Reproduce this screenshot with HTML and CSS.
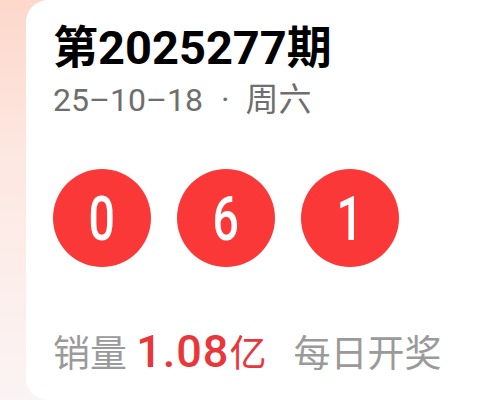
FILE: index.html
```html
<html>
	<head>
		<meta charset="utf-8">
		<title>Draw</title>
		<link rel="stylesheet" href="styles.css">
	</head>
	<body>
		<div class="page">
			<div class="side-strip"></div>
			<div class="draw-card">
				<div class="issue-title">第<span class="num">2025277</span>期</div>
				<div class="issue-date"><span class="num">25–10–18</span><span class="dot">·</span>周六</div>
				<div class="ball-row">
					<div class="ball"><span class="ball-num">0</span></div>
					<div class="ball"><span class="ball-num">6</span></div>
					<div class="ball"><span class="ball-num">1</span></div>
				</div>
				<div class="sales-line">
					<span class="sales-label">销量</span>
					<span class="sales-value"><span class="num">1.08</span>亿</span>
					<span class="sales-note">每日开奖</span>
				</div>
			</div>
		</div>
	</body>
</html>
```

FILE: styles.css
```css
body {
	margin: 0;
	background-color: #ffffff;
	font-family: Roboto, "Noto Sans CJK SC", sans-serif;
}

.page {
	display: flex;
	width: 485px;
	height: 400px;
	overflow: hidden;
	background: linear-gradient(180deg, #fdd8cb 0%, #fde8e2 40%, #fbf4f4 100%);
}

.side-strip {
	width: 26px;
	flex-shrink: 0;
}

.draw-card {
	flex: 1;
	background-color: #ffffff;
	border-radius: 22px 0 0 22px;
	padding: 20px 0 0 27px;
	display: flex;
	flex-direction: column;
}

.issue-title {
	font-size: 45px;
	font-weight: bold;
	color: #000000;
	line-height: 56px;
}

.issue-title .num {
	font-size: 47px;
}

.issue-date {
	font-size: 33px;
	color: #6e6e6e;
	line-height: 42px;
	margin-top: 2px;
}

.issue-date .num {
	font-size: 32px;
}

.dot {
	margin: 0 16px 0 18px;
}

.ball-row {
	display: flex;
	gap: 26px;
	margin-top: 48px;
}

.ball {
	width: 98px;
	height: 98px;
	border-radius: 50%;
	background-color: #fb3838;
	color: #ffffff;
	display: flex;
	justify-content: center;
	align-items: center;
}

.ball-num {
	display: inline-block;
	font-size: 62px;
	font-weight: 500;
	transform: scaleX(0.75);
}

.sales-line {
	margin-top: 62px;
	font-size: 37px;
	line-height: 46px;
	color: #9a9a9a;
}

.sales-value {
	color: #e8363a;
	margin-right: 18px;
}

.sales-value .num {
	font-size: 45px;
	font-weight: 500;
	letter-spacing: 1px;
}
```
